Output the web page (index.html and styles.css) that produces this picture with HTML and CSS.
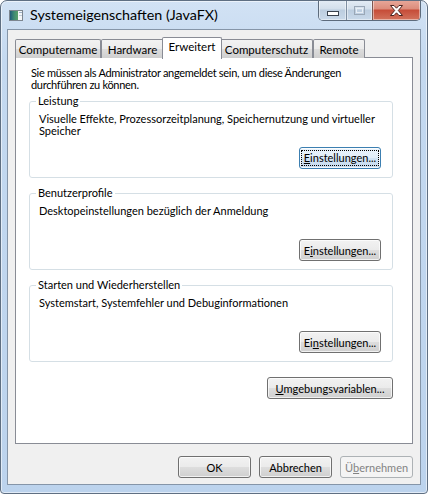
FILE: index.html
```html
<!DOCTYPE html>
<html lang="de">
<head>
<meta charset="utf-8">
<title>Systemeigenschaften (JavaFX)</title>
<link rel="stylesheet" href="styles.css">
</head>
<body>
<div class="window">
  <div class="titlebar">
    <svg class="app-icon" width="14" height="11" viewBox="0 0 14 11">
      <defs>
        <linearGradient id="ig" x1="0" y1="0" x2="1" y2="0">
          <stop offset="0" stop-color="#1f5a7a"/>
          <stop offset="0.5" stop-color="#3d8a73"/>
          <stop offset="1" stop-color="#5aa06a"/>
        </linearGradient>
      </defs>
      <rect x="0.5" y="0.5" width="13" height="10" fill="#f4f6f8" stroke="#7d8690"/>
      <rect x="1" y="1" width="8" height="9" fill="url(#ig)"/>
      <rect x="10" y="2" width="3" height="1" fill="#9fb3c6"/>
      <rect x="10" y="5" width="3" height="1" fill="#c0ccd8"/>
    </svg>
    <span class="title">Systemeigenschaften (JavaFX)</span>
    <div class="caption">
      <div class="cbtn cmin">
        <svg width="12" height="5" viewBox="0 0 12 5"><rect x="0.5" y="0.5" width="11" height="4" fill="#fff" stroke="#39424e"/></svg>
      </div>
      <div class="cbtn cmax">
        <svg width="11" height="9" viewBox="0 0 11 9"><rect x="0.5" y="0.5" width="10" height="8" fill="none" stroke="#9aa7b6"/><rect x="2.5" y="2.5" width="6" height="4" fill="none" stroke="#e8eef5"/></svg>
      </div>
      <div class="cbtn cclose">
        <svg width="15" height="11" viewBox="0 0 15 11"><path d="M1.5 0.5 L5 0.5 L7.5 3.2 L10 0.5 L13.5 0.5 L9.3 5.5 L13.5 10.5 L10 10.5 L7.5 7.8 L5 10.5 L1.5 10.5 L5.7 5.5 Z" fill="#fff" stroke="#4a2420" stroke-width="1" stroke-linejoin="round"/></svg>
      </div>
    </div>
  </div>
  <div class="client">
    <div class="tabs">
      <div class="tab t1">Computername</div>
      <div class="tab t2">Hardware</div>
      <div class="tab t3 active">Erweitert</div>
      <div class="tab t4">Computerschutz</div>
      <div class="tab t5">Remote</div>
    </div>
    <div class="panel">
      <p class="intro">Sie müssen als Administrator angemeldet sein, um diese Änderungen<br>durchführen zu können.</p>
      <fieldset class="group">
        <legend>Leistung</legend>
        <div class="group-body">
          <p class="desc">Visuelle Effekte, Prozessorzeitplanung, Speichernutzung und virtueller<br>Speicher</p>
          <button class="btn set focused" type="button"><span class="focus-ring"><u>E</u>instellungen...</span></button>
        </div>
      </fieldset>
      <fieldset class="group">
        <legend>Benutzerprofile</legend>
        <div class="group-body">
          <p class="desc">Desktopeinstellungen bezüglich der Anmeldung</p>
          <button class="btn set" type="button">E<u>i</u>nstellungen...</button>
        </div>
      </fieldset>
      <fieldset class="group">
        <legend>Starten und Wiederherstellen</legend>
        <div class="group-body">
          <p class="desc">Systemstart, Systemfehler und Debuginformationen</p>
          <button class="btn set" type="button">Ei<u>n</u>stellungen...</button>
        </div>
      </fieldset>
      <div class="env-row">
        <button class="btn env" type="button"><u>U</u>mgebungsvariablen...</button>
      </div>
    </div>
    <div class="footer">
      <button class="btn dlg" type="button">OK</button>
      <button class="btn dlg" type="button">Abbrechen</button>
      <button class="btn dlg" type="button" disabled>Ü<u>b</u>ernehmen</button>
    </div>
  </div>
</div>
</body>
</html>
```

FILE: styles.css
```css
html, body {
  margin: 0;
  padding: 0;
  background: #ffffff;
}

body {
  font-family: Lato, "Open Sans", sans-serif;
  font-size: 11px;
  color: #000;
}

.window {
  width: 428px;
  height: 494px;
  box-sizing: border-box;
  border: 1px solid #5f6f82;
  border-radius: 7px 7px 4px 4px;
  background: linear-gradient(180deg, #d2e2f4 0px, #c4d9f0 60px, #bcd3ed 100%);
  box-shadow: inset 0 0 0 1px rgba(255, 255, 255, 0.55);
  display: flex;
  flex-direction: column;
  overflow: hidden;
}

/* title bar */
.titlebar {
  height: 28px;
  flex: none;
  display: flex;
  align-items: flex-start;
}

.app-icon {
  margin: 9px 0 0 8px;
  flex: none;
}

.title {
  margin: 5px 0 0 7px;
  font-size: 14.3px;
  line-height: 17px;
  color: #000;
}

.caption {
  margin-left: auto;
  margin-right: 6px;
  margin-top: -1px;
  display: flex;
  height: 20px;
  border: 1px solid #5d6b7c;
  border-top: none;
  border-radius: 0 0 5px 5px;
  overflow: hidden;
}

.cbtn {
  display: flex;
  align-items: center;
  justify-content: center;
  height: 100%;
  box-shadow: inset 0 0 0 1px rgba(255, 255, 255, 0.45);
}

.cmin {
  width: 27px;
  background: linear-gradient(180deg, #e4ecf5 0%, #d3dfeb 45%, #bccddf 50%, #c9d9ea 100%);
  border-right: 1px solid #7f8fa2;
}

.cmin svg {
  margin-top: 7px;
}

.cmax {
  width: 25px;
  background: linear-gradient(180deg, #e4ecf5 0%, #d3dfeb 45%, #bccddf 50%, #c9d9ea 100%);
  border-right: 1px solid #7f5650;
}

.cclose {
  width: 47px;
  background: linear-gradient(180deg, #e8a99b 0%, #dc8c7b 45%, #c64c38 50%, #d2735d 100%);
}

/* client area */
.client {
  flex: 1;
  margin: 0 6px 8px 6px;
  border: 1px solid #8595a8;
  background: #f0f0f0;
  padding: 7px 7px 0 7px;
  display: flex;
  flex-direction: column;
  min-height: 0;
}

.tabs {
  display: flex;
  align-items: flex-end;
  height: 21px;
  flex: none;
  position: relative;
  z-index: 1;
  margin-bottom: -1px;
}

.tab {
  box-sizing: border-box;
  height: 19px;
  border: 1px solid #898c95;
  border-bottom: none;
  border-radius: 2px 2px 0 0;
  background: linear-gradient(180deg, #f2f2f2 0%, #ebebeb 50%, #dddddd 50%, #cfcfcf 100%);
  font-size: 11.5px;
  line-height: 19px;
  text-align: center;
  margin-right: -1px;
  white-space: nowrap;
}

.tab.active {
  height: 22px;
  background: #ffffff;
  line-height: 18px;
  position: relative;
  z-index: 2;
  margin-left: -1px;
  margin-right: -2px;
  margin-bottom: -1px;
}

.t1 { width: 86px; }
.t2 { width: 63px; margin-left: 1px; }
.t3 { width: 60px; }
.t4 { width: 93px; }
.t5 { width: 52px; margin-left: 1px; }

.panel {
  box-sizing: border-box;
  height: 387px;
  flex: none;
  border: 1px solid #898c95;
  background: #ffffff;
  padding: 9px 19px 0 13px;
}

.intro {
  margin: 0 0 4px 2px;
  line-height: 12px;
  letter-spacing: -0.3px;
}

.group {
  margin: 0;
  padding: 0 11px 8px 9px;
  border: 1px solid #d5dfe5;
  border-radius: 3px;
  min-width: 0;
}

.group + .group {
  margin-top: 9px;
}

.group legend {
  padding: 0 2px;
  margin-left: -3px;
  line-height: 12px;
}

.group-body {
  height: 56px;
  padding-top: 6px;
  display: flex;
  flex-direction: column;
}

.desc {
  margin: 0;
  line-height: 12px;
}

.btn {
  box-sizing: border-box;
  height: 22px;
  border: 1px solid #707070;
  border-radius: 3px;
  background: linear-gradient(180deg, #f2f2f2 0%, #ebebeb 48%, #dddddd 52%, #cfcfcf 100%);
  box-shadow: inset 0 0 0 1px rgba(255, 255, 255, 0.7);
  font-family: Lato, "Open Sans", sans-serif;
  font-size: 11px;
  color: #000;
  padding: 0;
  display: flex;
  align-items: center;
  justify-content: center;
}

.btn u {
  text-underline-offset: 1px;
}

.set {
  width: 82px;
  margin-top: auto;
  align-self: flex-end;
}

.focused {
  border-color: #3c7fb1;
  background: linear-gradient(180deg, #eaf3fb 0%, #e2eef9 48%, #d2e3f3 52%, #c4d9ee 100%);
  box-shadow: inset 0 0 0 1px rgba(255, 255, 255, 0.8);
}

.focus-ring {
  border: 1px dotted #000;
  padding: 1px 2px;
  line-height: 12px;
}

.env-row {
  display: flex;
  justify-content: flex-end;
  margin-top: 15px;
}

.env {
  width: 126px;
}

.footer {
  display: flex;
  justify-content: flex-end;
  gap: 8px;
  padding-top: 12px;
}

.dlg {
  width: 73px;
}

.btn:disabled {
  border-color: #adb2b5;
  background: #f4f4f4;
  box-shadow: none;
  color: #838383;
}
```
